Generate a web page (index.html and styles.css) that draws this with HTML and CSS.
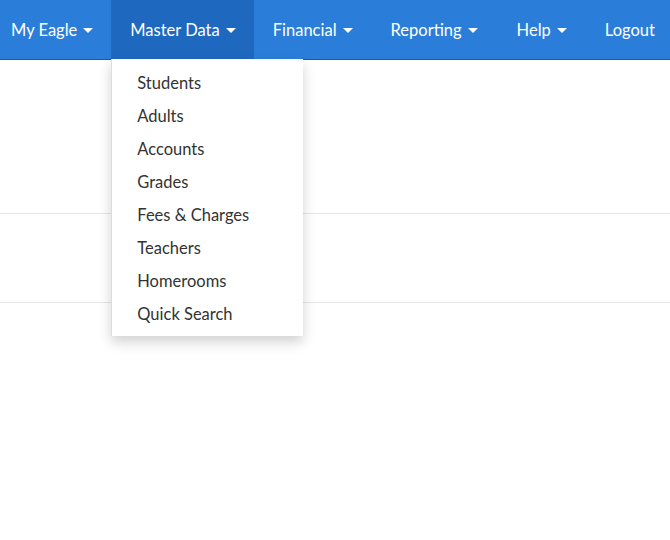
FILE: index.html
```
<!DOCTYPE html>
<html>
<head>
<meta charset="utf-8">
<link rel="stylesheet" href="styles.css">
</head>
<body>
<nav class="navbar">
  <ul class="nav">
    <li class="nav-item first"><span>My Eagle</span><span class="caret"></span></li>
    <li class="nav-item active"><span>Master Data</span><span class="caret"></span>
      <ul class="dropdown">
        <li>Students</li>
        <li>Adults</li>
        <li>Accounts</li>
        <li>Grades</li>
        <li>Fees &amp; Charges</li>
        <li>Teachers</li>
        <li>Homerooms</li>
        <li>Quick Search</li>
      </ul>
    </li>
    <li class="nav-item"><span>Financial</span><span class="caret"></span></li>
    <li class="nav-item wide"><span>Reporting</span><span class="caret"></span></li>
    <li class="nav-item wide"><span>Help</span><span class="caret"></span></li>
    <li class="nav-item"><span>Logout</span></li>
  </ul>
</nav>
<main class="content">
  <div class="row row-a"></div>
  <div class="row row-b"></div>
</main>
</body>
</html>
```
FILE: styles.css
```
* { box-sizing: border-box; }
html, body { margin: 0; padding: 0; background: #fff; }
html, body { min-height: 100%; height: 100%; }
body { font-family: Lato, "Open Sans", sans-serif; color: #333; }

.navbar {
  position: relative;
  z-index: 5;
  height: 60px;
  background: #2a7ed9;
  border-bottom: 1px solid #1b5ba8;
}
.nav {
  list-style: none;
  margin: 0;
  padding: 0;
  display: flex;
  height: 59px;
}
.nav-item {
  position: relative;
  display: flex;
  align-items: center;
  height: 59px;
  padding: 0 18px 0 19px;
  color: #fff;
  font-size: 16.5px;
  white-space: nowrap;
}
.nav-item.first { padding-left: 11px; }
.nav-item.wide { padding-right: 19px; padding-left: 20px; }
.nav-item.active { background: #1f68c0; }
.caret {
  display: inline-block;
  width: 0;
  height: 0;
  margin-left: 6px;
  margin-top: 2px;
  border-left: 5px solid transparent;
  border-right: 5px solid transparent;
  border-top: 5px solid #fff;
}

.dropdown {
  position: absolute;
  top: 59px;
  left: 0;
  z-index: 10;
  width: 192px;
  margin: 0;
  padding: 8px 0 5px;
  list-style: none;
  background: #fff;
  border-left: 1px solid #ddd;
  box-shadow: 0 6px 12px rgba(0,0,0,0.18);
}
.dropdown li {
  height: 33px;
  line-height: 33px;
  padding-left: 25px;
  color: #333;
  font-size: 16.5px;
}

.content { display: flex; flex-direction: column; }
.row { border-bottom: 1px solid #e6e6e6; }
.row-a { height: 154px; }
.row-b { height: 89px; }
```
